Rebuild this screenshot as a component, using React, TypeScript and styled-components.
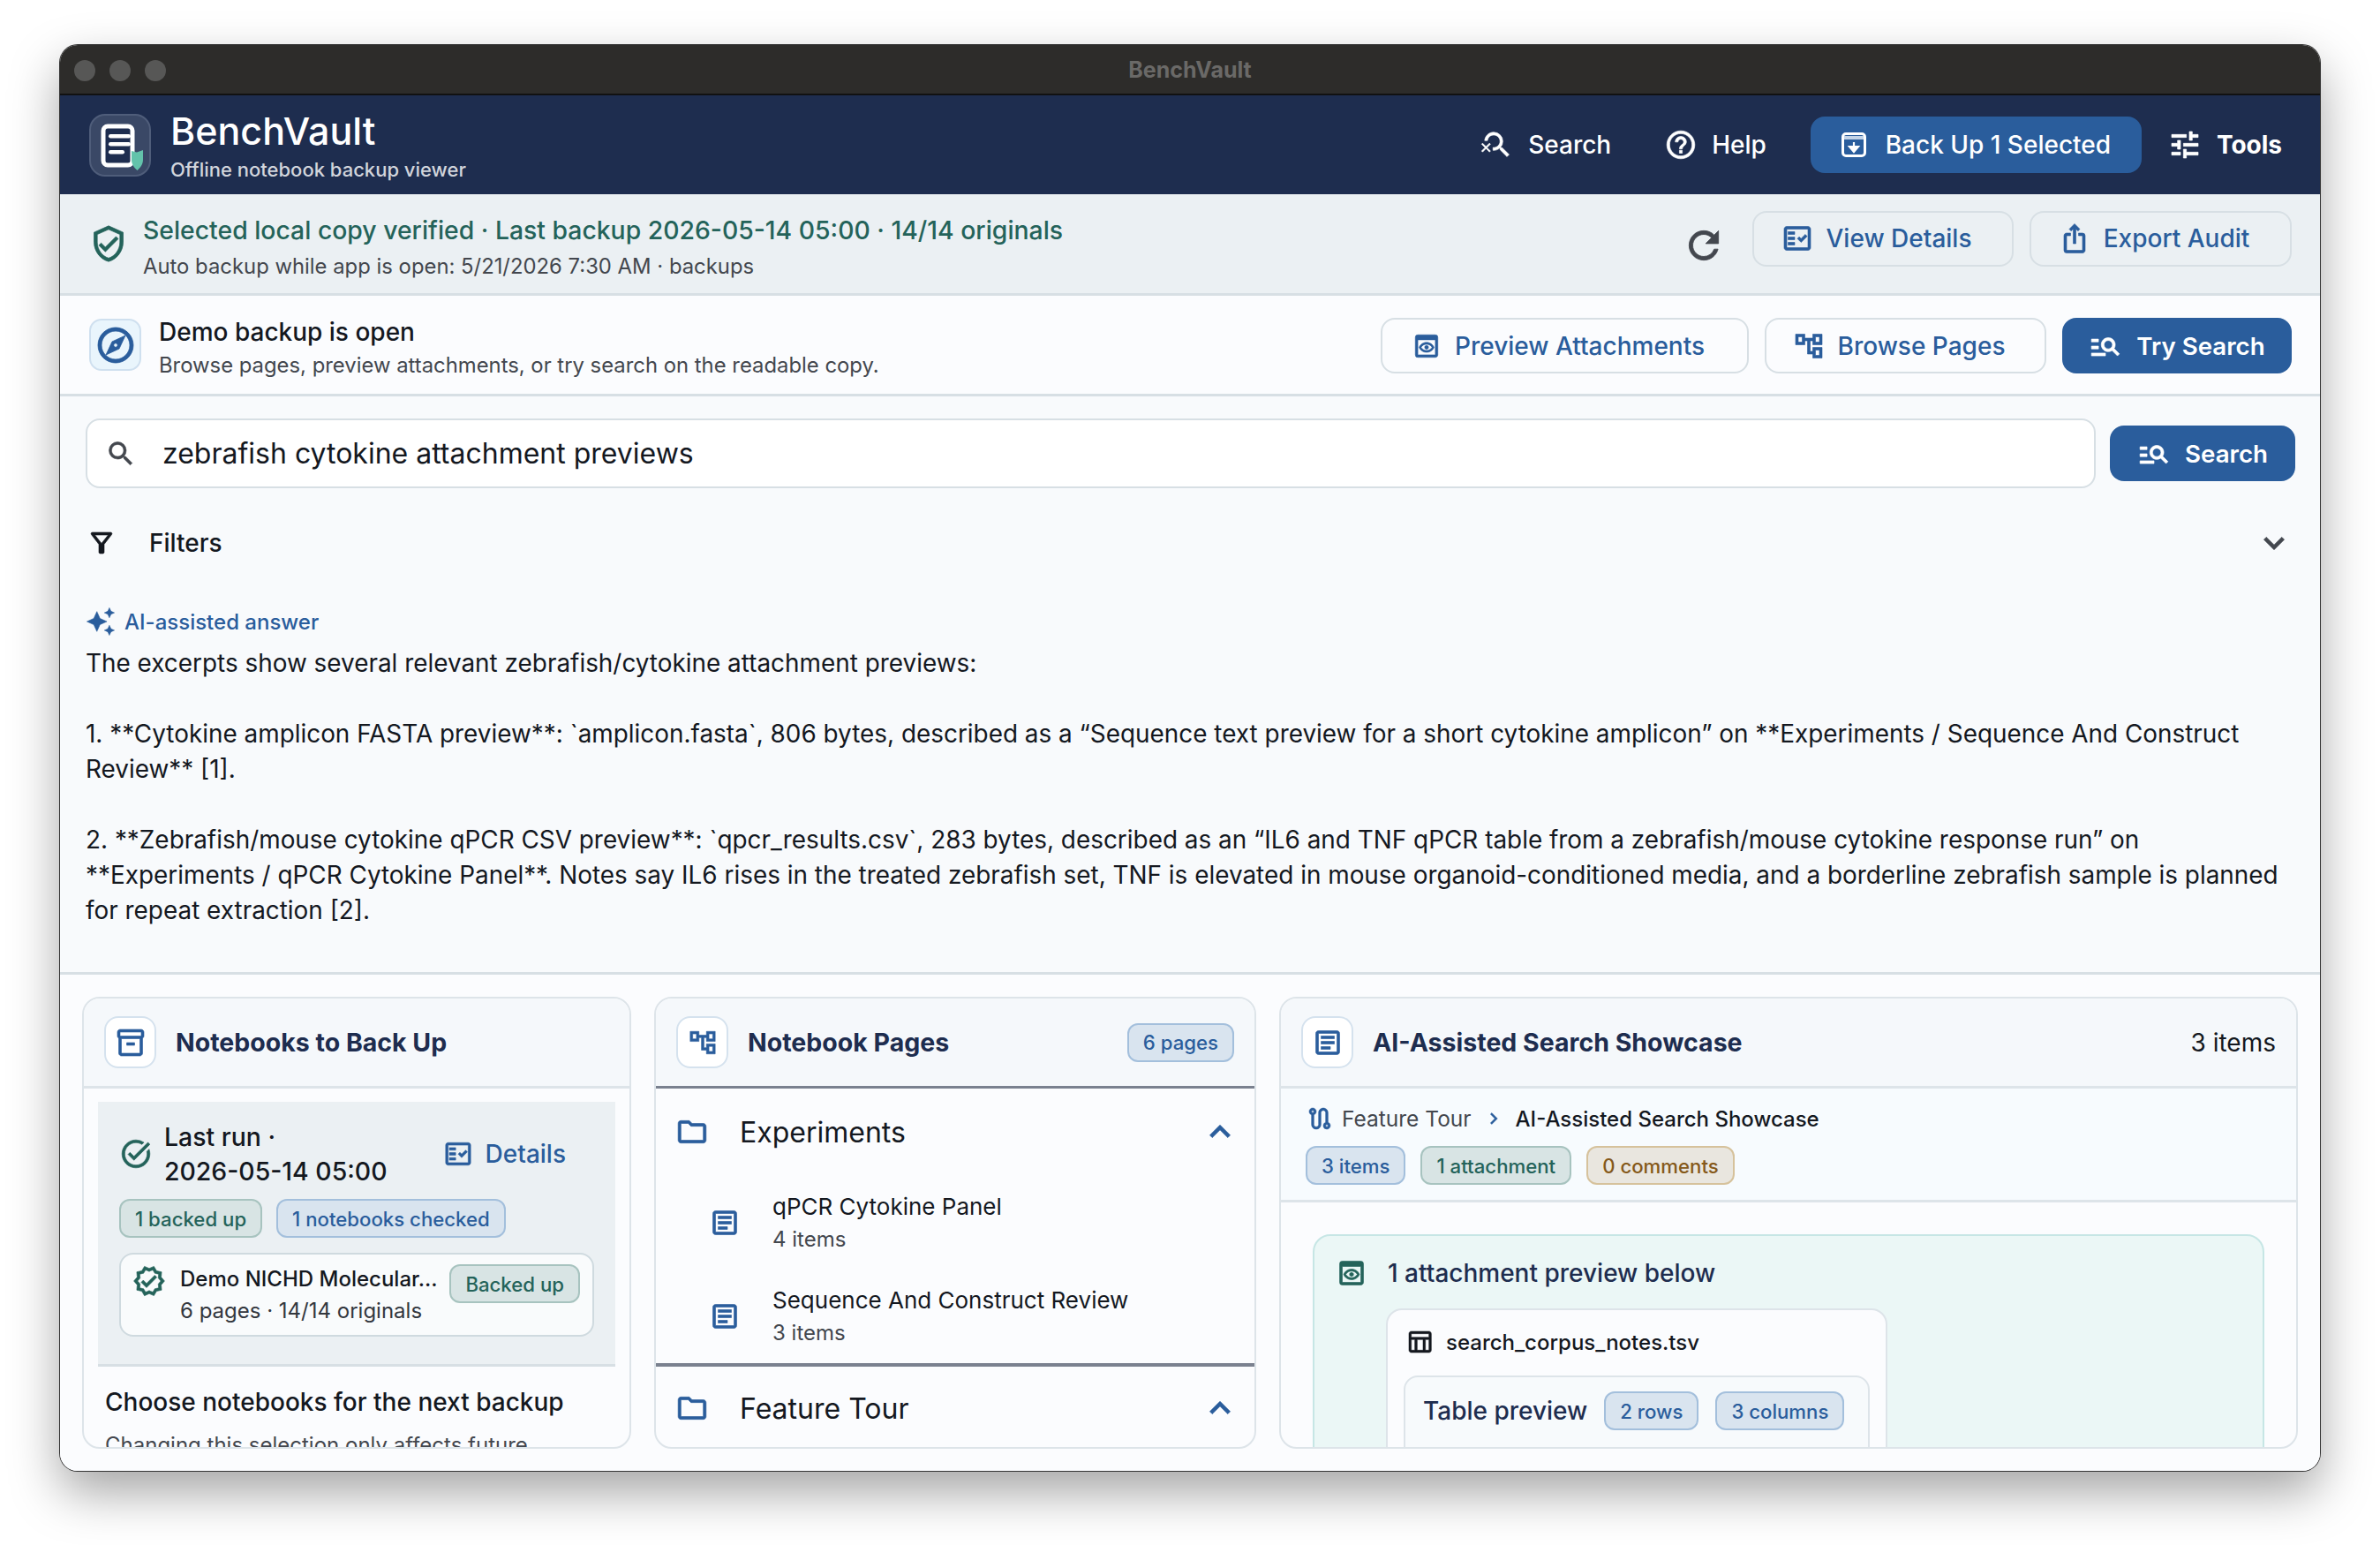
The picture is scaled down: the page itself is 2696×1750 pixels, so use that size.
import styled, { createGlobalStyle } from 'styled-components';
import {
  MdAutoAwesome,
  MdChevronRight,
  MdExpandLess,
  MdExpandMore,
  MdHelpOutline,
  MdManageSearch,
  MdOutlineAccountTree,
  MdOutlineArticle,
  MdOutlineExplore,
  MdOutlineFactCheck,
  MdOutlineFilterAlt,
  MdOutlineFolder,
  MdOutlineInventory2,
  MdOutlineIosShare,
  MdOutlinePreview,
  MdOutlineRoute,
  MdOutlineTableChart,
  MdOutlineTaskAlt,
  MdOutlineTune,
  MdOutlineVerified,
  MdOutlineVerifiedUser,
  MdRefresh,
  MdSearch,
  MdSearchOff,
} from 'react-icons/md';

type Tone = 'green' | 'blue' | 'amber';

const GlobalStyle = createGlobalStyle`
  html, body {
    margin: 0;
    height: 1750px;
    overflow: hidden;
    background: #ffffff;
    font-family: Inter, "Liberation Sans", sans-serif;
  }
  * { box-sizing: border-box; }
  svg { stroke: currentColor; stroke-width: 0.4px; }
  svg path[fill="none"] { stroke: none; }
  svg.plain { stroke: none; }
`;

function LogoMark() {
  return (
    <svg className="plain" width="66" height="67" viewBox="0 0 66 67">
      <rect x="14" y="12" width="33" height="44" rx="5" fill="#1e2d4f" stroke="#ffffff" strokeWidth="5" />
      <rect x="20" y="21" width="25" height="4.5" rx="2.2" fill="#ffffff" />
      <rect x="20" y="30" width="25" height="4.5" rx="2.2" fill="#ffffff" />
      <rect x="20" y="39" width="18" height="4.5" rx="2.2" fill="#ffffff" />
      <path d="M46 40 L52 41.5 L59 39 V50 C59 55 56 59 52.5 62 C49 59 46 55 46 50 Z" fill="#63c3ab" />
    </svg>
  );
}

function BackupIcon() {
  return (
    <svg className="plain" width="28" height="28" viewBox="0 0 28 28">
      <rect x="1.5" y="1.5" width="25" height="25" rx="3.5" fill="none" stroke="#ffffff" strokeWidth="3" />
      <rect x="3" y="4" width="22" height="4" fill="#c3d4e8" />
      <path d="M14 11 V19 M9 16 H19 L14 22 Z" stroke="#ffffff" strokeWidth="2.2" fill="#ffffff" />
    </svg>
  );
}

export default function App() {
  return (
    <>
      <GlobalStyle />
      <Window>
        <TitleBar>
          <TrafficLights>
            <Light />
            <Light />
            <Light />
          </TrafficLights>
          <WindowTitle>BenchVault</WindowTitle>
        </TitleBar>

        <Header>
          <Brand>
            <LogoBox>
              <LogoMark />
            </LogoBox>
            <BrandText>
              <BrandName>BenchVault</BrandName>
              <BrandSub>Offline notebook backup viewer</BrandSub>
            </BrandText>
          </Brand>
          <HeaderNav>
            <NavItem $after={60}>
              <MdSearchOff size={38} />
              Search
            </NavItem>
            <NavItem $after={50}>
              <MdHelpOutline size={38} />
              Help
            </NavItem>
            <BackupButton>
              <BackupIcon />
              Back Up 1 Selected
            </BackupButton>
            <NavItem $bold>
              <MdOutlineTune size={40} />
              Tools
            </NavItem>
          </HeaderNav>
        </Header>

        <StatusBar>
          <StatusInfo>
            <ShieldSlot>
              <MdOutlineVerifiedUser size={44} />
            </ShieldSlot>
            <StatusText>
              <StatusTitle>Selected local copy verified · Last backup 2026-05-14 05:00 · 14/14 originals</StatusTitle>
              <StatusSub>Auto backup while app is open: 5/21/2026 7:30 AM · backups</StatusSub>
            </StatusText>
          </StatusInfo>
          <StatusActions>
            <RefreshSlot>
              <MdRefresh size={50} />
            </RefreshSlot>
            <OutlineButton $width={296} $flat>
              <MdOutlineFactCheck size={36} />
              View Details
            </OutlineButton>
            <OutlineButton $width={297} $flat>
              <MdOutlineIosShare size={36} />
              Export Audit
            </OutlineButton>
          </StatusActions>
        </StatusBar>

        <Banner>
          <BannerInfo>
            <CompassBox>
              <MdOutlineExplore size={48} />
            </CompassBox>
            <StatusText>
              <BannerTitle>Demo backup is open</BannerTitle>
              <BannerSub>Browse pages, preview attachments, or try search on the readable copy.</BannerSub>
            </StatusText>
          </BannerInfo>
          <BannerActions>
            <OutlineButton $width={417}>
              <MdOutlinePreview size={34} />
              Preview Attachments
            </OutlineButton>
            <OutlineButton $width={319}>
              <MdOutlineAccountTree size={36} />
              Browse Pages
            </OutlineButton>
            <SolidButton $width={260} $height={63}>
              <MdManageSearch size={38} />
              Try Search
            </SolidButton>
          </BannerActions>
        </Banner>

        <SearchSection>
          <SearchRow>
            <SearchBox>
              <MdSearch size={36} />
              <SearchValue>zebrafish cytokine attachment previews</SearchValue>
            </SearchBox>
            <SolidButton $width={210} $height={63}>
              <MdManageSearch size={38} />
              Search
            </SolidButton>
          </SearchRow>
          <FilterRow>
            <FilterLabel>
              <MdOutlineFilterAlt size={36} />
              Filters
            </FilterLabel>
            <MdExpandMore size={46} />
          </FilterRow>
          <AiLabel>
            <MdAutoAwesome size={34} />
            AI-assisted answer
          </AiLabel>
          <Answer>
            <p>The excerpts show several relevant zebrafish/cytokine attachment previews:</p>
            <p>
              1. **Cytokine amplicon FASTA preview**: `amplicon.fasta`, 806 bytes, described as a “Sequence text preview
              for a short cytokine amplicon” on **Experiments / Sequence And Construct Review** [1].
            </p>
            <p>
              2. **Zebrafish/mouse cytokine qPCR CSV preview**: `qpcr_results.csv`, 283 bytes, described as an “IL6 and
              TNF qPCR table from a zebrafish/mouse cytokine response run” on **Experiments / qPCR Cytokine Panel**.
              Notes say IL6 rises in the treated zebrafish set, TNF is elevated in mouse organoid-conditioned media, and
              a borderline zebrafish sample is planned for repeat extraction [2].
            </p>
          </Answer>
        </SearchSection>

        <Columns>
          <Card>
            <CardHeader>
              <CardIcon>
                <MdOutlineInventory2 size={36} />
              </CardIcon>
              <CardTitle>Notebooks to Back Up</CardTitle>
            </CardHeader>
            <CardBody>
              <RunPanel>
                <RunTop>
                  <RunStatus>
                    <MdOutlineTaskAlt size={38} />
                    <RunText>
                      Last run ·
                      <br />
                      2026-05-14 05:00
                    </RunText>
                  </RunStatus>
                  <DetailsLink>
                    <MdOutlineFactCheck size={34} />
                    Details
                  </DetailsLink>
                </RunTop>
                <ChipRow>
                  <Chip $tone="green">1 backed up</Chip>
                  <Chip $tone="blue">1 notebooks checked</Chip>
                </ChipRow>
                <NotebookRow>
                  <NotebookIcon>
                    <MdOutlineVerified size={38} />
                  </NotebookIcon>
                  <NotebookText>
                    <NotebookName>Demo NICHD Molecular...</NotebookName>
                    <NotebookMeta>6 pages · 14/14 originals</NotebookMeta>
                  </NotebookText>
                  <Chip $tone="green">Backed up</Chip>
                </NotebookRow>
              </RunPanel>
              <ChooseBlock>
                <ChooseTitle>Choose notebooks for the next backup</ChooseTitle>
                <ChooseSub>Changing this selection only affects future</ChooseSub>
              </ChooseBlock>
            </CardBody>
          </Card>

          <Card>
            <CardHeader $strong>
              <CardIcon>
                <MdOutlineAccountTree size={34} />
              </CardIcon>
              <CardTitle>Notebook Pages</CardTitle>
              <HeaderEnd>
                <Chip $tone="blue">6 pages</Chip>
              </HeaderEnd>
            </CardHeader>
            <CardBody>
              <FolderRow>
                <MdOutlineFolder size={38} />
                <FolderName>Experiments</FolderName>
                <MdExpandLess size={46} />
              </FolderRow>
              <PageRow>
                <MdOutlineArticle size={36} />
                <PageText>
                  <PageName>qPCR Cytokine Panel</PageName>
                  <PageMeta>4 items</PageMeta>
                </PageText>
              </PageRow>
              <PageRow>
                <MdOutlineArticle size={36} />
                <PageText>
                  <PageName>Sequence And Construct Review</PageName>
                  <PageMeta>3 items</PageMeta>
                </PageText>
              </PageRow>
              <FolderDivider />
              <LastFolderRow>
                <MdOutlineFolder size={38} />
                <FolderName>Feature Tour</FolderName>
                <MdExpandLess size={46} />
              </LastFolderRow>
            </CardBody>
          </Card>

          <Card>
            <CardHeader>
              <CardIcon>
                <MdOutlineArticle size={36} />
              </CardIcon>
              <CardTitle>AI-Assisted Search Showcase</CardTitle>
              <HeaderCount>3 items</HeaderCount>
            </CardHeader>
            <CardBody>
              <CrumbStrip>
                <Crumbs>
                  <CrumbIcon>
                    <MdOutlineRoute size={32} />
                  </CrumbIcon>
                  <CrumbParent>Feature Tour</CrumbParent>
                  <MdChevronRight size={26} />
                  <CrumbCurrent>AI-Assisted Search Showcase</CrumbCurrent>
                </Crumbs>
                <ChipRow>
                  <Chip $tone="blue">3 items</Chip>
                  <Chip $tone="green">1 attachment</Chip>
                  <Chip $tone="amber">0 comments</Chip>
                </ChipRow>
              </CrumbStrip>
              <AttachmentPanel>
                <AttachmentHead>
                  <MdOutlinePreview size={36} />
                  1 attachment preview below
                </AttachmentHead>
                <FileCard>
                  <FileName>
                    <MdOutlineTableChart size={32} />
                    search_corpus_notes.tsv
                  </FileName>
                  <PreviewBox>
                    <PreviewLabel>Table preview</PreviewLabel>
                    <Chip $tone="blue">2 rows</Chip>
                    <Chip $tone="blue">3 columns</Chip>
                  </PreviewBox>
                </FileCard>
              </AttachmentPanel>
            </CardBody>
          </Card>
        </Columns>
      </Window>
    </>
  );
}

const Window = styled.div`
  width: 2560px;
  height: 1615px;
  margin: 51px 0 0 68px;
  display: flex;
  flex-direction: column;
  overflow: hidden;
  border-radius: 20px;
  background: #fbfcfe;
  box-shadow: 0 0 0 1px #333333, 0 24px 56px rgba(0, 0, 0, 0.36);
  position: relative;
`;

const TitleBar = styled.div`
  flex: 0 0 57px;
  display: flex;
  align-items: center;
  justify-content: center;
  position: relative;
  background: #2d2c2a;
  border-bottom: 2px solid #111111;
`;

const TrafficLights = styled.div`
  position: absolute;
  left: 16px;
  top: 17px;
  display: flex;
  gap: 16px;
`;

const Light = styled.span`
  width: 24px;
  height: 24px;
  border-radius: 50%;
  background: #575756;
`;

const WindowTitle = styled.div`
  font-size: 25px;
  font-weight: 700;
  color: #6a6967;
`;

const Header = styled.header`
  flex: 0 0 112px;
  display: flex;
  align-items: center;
  justify-content: space-between;
  padding: 0 43px 0 33px;
  background: #1e2d4f;
  color: #ffffff;
`;

const Brand = styled.div`
  display: flex;
  align-items: center;
  gap: 22px;
`;

const LogoBox = styled.div`
  width: 70px;
  height: 71px;
  border-radius: 18px;
  background: #3a4866;
  border: 2px solid #4f5d7a;
  display: flex;
  align-items: center;
  justify-content: center;
`;

const BrandText = styled.div`
  display: flex;
  flex-direction: column;
  gap: 4px;
`;

const BrandName = styled.div`
  font-size: 43px;
  line-height: 52px;
  font-weight: 500;
`;

const BrandSub = styled.div`
  font-size: 22px;
  line-height: 28px;
  font-weight: 500;
  color: #d2d5dc;
`;

const HeaderNav = styled.nav`
  display: flex;
  align-items: center;
`;

const NavItem = styled.div<{ $bold?: boolean; $after?: number }>`
  display: flex;
  align-items: center;
  gap: 16px;
  margin-right: ${(p) => p.$after ?? 48}px;
  font-size: 28px;
  font-weight: ${(p) => (p.$bold ? 700 : 500)};
  &:last-child {
    margin-right: 0;
    margin-left: 29px;
  }
`;

const BackupButton = styled.div`
  width: 375px;
  height: 64px;
  display: flex;
  align-items: center;
  justify-content: center;
  gap: 22px;
  border-radius: 16px;
  background: #2a5d9c;
  font-size: 28px;
  font-weight: 500;
`;

const StatusBar = styled.section`
  flex: 0 0 115px;
  display: flex;
  align-items: center;
  justify-content: space-between;
  padding: 0 32px 0 33px;
  background: #ebf0f3;
  border-bottom: 3px solid #d7dfe4;
`;

const StatusInfo = styled.div`
  display: flex;
  align-items: center;
  gap: 17px;
`;

const ShieldSlot = styled.span`
  display: flex;
  color: #24635a;
`;

const StatusText = styled.div`
  display: flex;
  flex-direction: column;
`;

const StatusTitle = styled.div`
  margin-top: 8px;
  font-size: 28.35px;
  line-height: 40px;
  font-weight: 500;
  color: #24635a;
`;

const StatusSub = styled.div`
  margin-top: 4px;
  font-size: 23.85px;
  line-height: 34px;
  color: #43474e;
`;

const Actions = styled.div`
  display: flex;
  align-items: center;
  gap: 18px;
`;

const StatusActions = styled(Actions)`
  margin-bottom: 12px;
`;

const BannerActions = styled(Actions)`
  margin-top: 2px;
`;

const RefreshSlot = styled.span`
  display: flex;
  margin: 15px 12px 0 0;
  color: #43474e;
`;

const OutlineButton = styled.div<{ $width: number; $flat?: boolean }>`
  width: ${(p) => p.$width}px;
  height: 63px;
  display: flex;
  align-items: center;
  justify-content: center;
  gap: 15px;
  padding-right: 15px;
  border: 2px solid #d7dfe4;
  border-radius: 16px;
  background: ${(p) => (p.$flat ? '#ebf0f3' : '#fbfcfe')};
  color: #2a5d9c;
  font-size: 28px;
  font-weight: 500;
`;

const SolidButton = styled.div<{ $width: number; $height: number }>`
  width: ${(p) => p.$width}px;
  height: ${(p) => p.$height}px;
  display: flex;
  align-items: center;
  justify-content: center;
  gap: 16px;
  border-radius: 16px;
  background: #2a5d9c;
  color: #ffffff;
  font-size: 27.7px;
  font-weight: 600;
`;

const Banner = styled.section`
  flex: 0 0 114px;
  display: flex;
  align-items: center;
  justify-content: space-between;
  padding: 0 32px 0 33px;
  background: #fbfcfe;
  border-bottom: 3px solid #d7dfe4;
`;

const BannerInfo = styled.div`
  display: flex;
  align-items: center;
  gap: 20px;
`;

const CompassBox = styled.div`
  width: 59px;
  height: 59px;
  display: flex;
  align-items: center;
  justify-content: center;
  border: 2px solid #cfe0ef;
  border-radius: 14px;
  background: #e9f5fc;
  color: #2a5d9c;
`;

const BannerTitle = styled.div`
  margin-top: 6px;
  font-size: 28px;
  line-height: 36px;
  font-weight: 500;
  color: #14181f;
`;

const BannerSub = styled.div`
  margin-top: 4px;
  font-size: 23.85px;
  line-height: 32px;
  color: #43474e;
`;

const SearchSection = styled.section`
  flex: 0 0 655px;
  padding: 25px 28px 0 29px;
  background: #f8fafc;
  border-bottom: 3px solid #d7dfe4;
`;

const SearchRow = styled.div`
  display: flex;
  align-items: center;
  gap: 16px;
`;

const SearchBox = styled.div`
  flex: 1;
  height: 79px;
  display: flex;
  align-items: center;
  gap: 29px;
  padding: 0 0 0 20px;
  border: 2px solid #d7dfe4;
  border-radius: 16px;
  background: #ffffff;
  color: #43474e;
`;

const SearchValue = styled.div`
  font-size: 32px;
  color: #14181f;
`;

const FilterRow = styled.div`
  height: 44px;
  margin-top: 40px;
  padding-right: 1px;
  display: flex;
  align-items: center;
  justify-content: space-between;
  color: #43474e;
`;

const FilterLabel = styled.div`
  display: flex;
  align-items: center;
  gap: 36px;
  font-size: 28px;
  font-weight: 500;
  color: #14181f;
`;

const AiLabel = styled.div`
  display: flex;
  align-items: center;
  gap: 10px;
  margin-top: 47px;
  height: 40px;
  font-size: 24px;
  font-weight: 500;
  color: #2a5d9c;
`;

const Answer = styled.div`
  margin-top: 7px;
  padding-right: 4px;
  font-size: 27.9px;
  line-height: 40px;
  color: #14181f;
  p {
    margin: 0 0 40px;
  }
`;

const Columns = styled.div`
  flex: 1;
  min-height: 0;
  display: grid;
  grid-template-columns: 622px 682px 1fr;
  gap: 26px;
  padding: 25px 25px 25px;
  background: #fbfcfe;
`;

const Card = styled.article`
  min-height: 0;
  display: flex;
  flex-direction: column;
  overflow: hidden;
  border: 2px solid #dde4e9;
  border-radius: 20px;
  background: #fbfcfe;
`;

const CardHeader = styled.div<{ $strong?: boolean }>`
  flex: 0 0 102px;
  display: flex;
  align-items: center;
  gap: 22px;
  padding: 0 23px;
  background: #f5f8fb;
  border-bottom: 3px solid ${(p) => (p.$strong ? '#7a818f' : '#dde4e9')};
`;

const CardIcon = styled.div`
  width: 59px;
  height: 59px;
  display: flex;
  align-items: center;
  justify-content: center;
  border: 2px solid #d5e2ee;
  border-radius: 16px;
  background: #ffffff;
  color: #2a5d9c;
`;

const CardTitle = styled.h2`
  margin: 0;
  font-size: 28.5px;
  font-weight: 700;
  color: #1e2d4f;
`;

const HeaderEnd = styled.div`
  margin-left: auto;
`;

const HeaderCount = styled.div`
  margin-left: auto;
  font-size: 28px;
  color: #14181f;
`;

const CardBody = styled.div`
  flex: 1;
  min-height: 0;
  overflow: hidden;
`;

const RunPanel = styled.div`
  margin: 15px 16px 0;
  height: 300px;
  padding: 20px 24px 0;
  background: #ebf0f3;
  border-bottom: 3px solid #d7dfe4;
`;

const RunTop = styled.div`
  display: flex;
  align-items: center;
  justify-content: space-between;
  padding-right: 32px;
`;

const RunStatus = styled.div`
  display: flex;
  align-items: center;
  gap: 13px;
  color: #24635a;
`;

const RunText = styled.div`
  font-size: 28.4px;
  line-height: 39px;
  font-weight: 500;
  color: #14181f;
`;

const DetailsLink = styled.div`
  display: flex;
  align-items: center;
  gap: 14px;
  font-size: 28px;
  font-weight: 500;
  color: #2a5d9c;
`;

const ChipRow = styled.div`
  display: flex;
  align-items: center;
  gap: 16px;
  margin-top: 12px;
`;

const Chip = styled.span<{ $tone: Tone }>`
  display: inline-flex;
  align-items: center;
  flex: none;
  height: 44px;
  padding: 0 16px;
  border-radius: 12px;
  border: 2px solid
    ${(p) => (p.$tone === 'green' ? '#a7c3bf' : p.$tone === 'blue' ? '#a3bfdc' : '#d6c29c')};
  background: ${(p) => (p.$tone === 'green' ? '#d8e4e4' : p.$tone === 'blue' ? '#d9e4ef' : '#e9e6df')};
  color: ${(p) => (p.$tone === 'green' ? '#24635a' : p.$tone === 'blue' ? '#2a5d9c' : '#85591a')};
  font-size: 22.2px;
  font-weight: 500;
`;

const NotebookRow = styled.div`
  height: 95px;
  margin-top: 17px;
  padding: 11px 14px 0 13px;
  display: flex;
  align-items: flex-start;
  gap: 16px;
  border: 2px solid #cfdadf;
  border-radius: 16px;
  background: #f9fbfc;
`;

const NotebookIcon = styled.span`
  display: flex;
  color: #24635a;
`;

const NotebookText = styled.div`
  flex: 1;
  min-width: 0;
`;

const NotebookName = styled.div`
  font-size: 24px;
  line-height: 34px;
  font-weight: 500;
  white-space: nowrap;
  color: #14181f;
`;

const NotebookMeta = styled.div`
  margin-top: 3px;
  font-size: 24px;
  line-height: 32px;
  white-space: nowrap;
  color: #33373e;
`;

const ChooseBlock = styled.div`
  padding: 20px 24px 0;
`;

const ChooseTitle = styled.div`
  font-size: 28px;
  line-height: 40px;
  font-weight: 500;
  color: #14181f;
`;

const ChooseSub = styled.div`
  margin-top: 13px;
  font-size: 24px;
  line-height: 32px;
  color: #43474e;
`;

const FolderRow = styled.div`
  height: 98px;
  display: flex;
  align-items: center;
  gap: 35px;
  padding: 0 16px 0 22px;
  color: #2a5d9c;
`;

const LastFolderRow = styled(FolderRow)`
  height: 94px;
`;

const FolderName = styled.div`
  flex: 1;
  font-size: 32px;
  color: #14181f;
`;

const PageRow = styled.div`
  height: 106px;
  margin-top: 1px;
  padding-left: 60px;
  display: flex;
  align-items: center;
  gap: 36px;
  color: #2a5d9c;
  & + & {
    margin-top: 0;
  }
`;

const PageText = styled.div`
  display: flex;
  flex-direction: column;
  gap: 6px;
`;

const PageName = styled.div`
  font-size: 26px;
  line-height: 32px;
  color: #14181f;
`;

const PageMeta = styled.div`
  font-size: 24px;
  line-height: 30px;
  color: #43474e;
`;

const FolderDivider = styled.div`
  height: 4px;
  background: #7a818f;
`;

const CrumbStrip = styled.div`
  height: 129px;
  padding: 12px 30px 0 28px;
  background: #f7fbfe;
  border-bottom: 3px solid #dde4e9;
  ${ChipRow} {
    gap: 17px;
    margin-top: 9px;
  }
`;

const Crumbs = styled.div`
  display: flex;
  align-items: center;
  gap: 12px;
  height: 44px;
  font-size: 24px;
  color: #2a5d9c;
`;

const CrumbIcon = styled.span`
  display: flex;
`;

const CrumbParent = styled.span`
  margin-left: -3px;
  font-size: 24.5px;
  color: #43474e;
`;

const CrumbCurrent = styled.span`
  font-weight: 500;
  color: #14181f;
`;

const AttachmentPanel = styled.div`
  margin: 36px 36px 0;
  height: 400px;
  padding: 20px 24px;
  border: 2px solid #c6e6e5;
  border-radius: 20px;
  background: #ebf7f6;
`;

const AttachmentHead = styled.div`
  display: flex;
  align-items: center;
  gap: 23px;
  height: 44px;
  font-size: 28px;
  font-weight: 500;
  color: #1e2d4f;
  svg {
    color: #24635a;
  }
`;

const FileCard = styled.div`
  width: 568px;
  height: 300px;
  margin: 18px 0 0 57px;
  padding: 16px 18px 0;
  border: 2px solid #dde4e9;
  border-radius: 18px;
  background: #fbfcfe;
`;

const FileName = styled.div`
  display: flex;
  align-items: center;
  gap: 14px;
  height: 40px;
  margin-left: 2px;
  font-size: 24px;
  font-weight: 500;
  color: #14181f;
`;

const PreviewBox = styled.div`
  height: 200px;
  margin-top: 18px;
  padding: 16px 20px;
  display: flex;
  align-items: flex-start;
  gap: 19px;
  border: 2px solid #dde4e9;
  border-radius: 16px;
  background: #f7fafc;
`;

const PreviewLabel = styled.div`
  font-size: 28px;
  line-height: 44px;
  font-weight: 500;
  white-space: nowrap;
  color: #1e2d4f;
`;
